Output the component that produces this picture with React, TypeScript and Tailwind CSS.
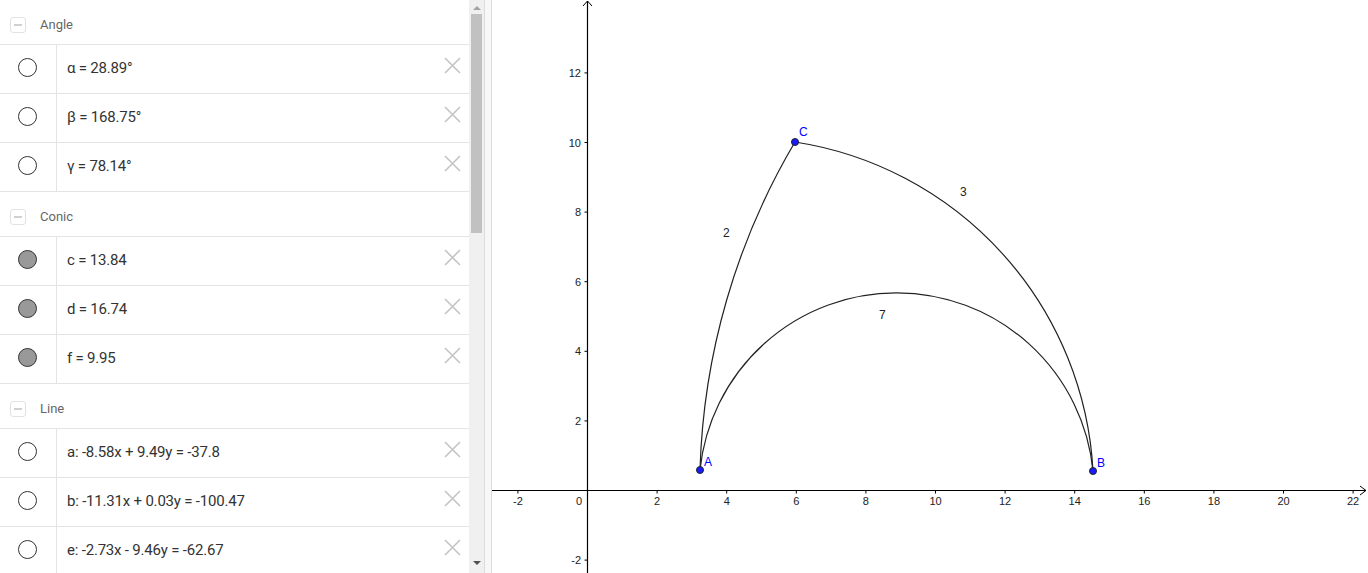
import React from "react";

type Item = { text: string; filled: boolean };
type Section = { title: string; items: Item[] };

const sections: Section[] = [
    {
        title: "Angle",
        items: [
            { text: "α = 28.89°", filled: false },
            { text: "β = 168.75°", filled: false },
            { text: "γ = 78.14°", filled: false },
        ],
    },
    {
        title: "Conic",
        items: [
            { text: "c = 13.84", filled: true },
            { text: "d = 16.74", filled: true },
            { text: "f = 9.95", filled: true },
        ],
    },
    {
        title: "Line",
        items: [
            { text: "a: -8.58x + 9.49y = -37.8", filled: false },
            { text: "b: -11.31x + 0.03y = -100.47", filled: false },
            { text: "e: -2.73x - 9.46y = -62.67", filled: false },
        ],
    },
];

const OX = 587.5;
const OY = 490.5;
const S = 34.8;

function SectionHeader({ title }: { title: string }) {
    return (
        <div className="flex h-[45px] items-center gap-[14px] border-b border-[#e4e4e4] pl-[10px] pt-[6px]">
            <div className="flex h-[16px] w-[16px] items-center justify-center rounded-[3px] border border-[#e2e2e2] bg-white">
                <div className="h-[2px] w-[8px] bg-[#d0d0d0]" />
            </div>
            <span className="text-[13px] text-[#666]">{title}</span>
        </div>
    );
}

function Row({ item }: { item: Item }) {
    return (
        <div className="flex h-[49px] items-stretch border-b border-[#e4e4e4]">
            <div className="flex w-[57px] shrink-0 items-center justify-center border-r border-[#e4e4e4] pb-[3px] pr-[1px]">
                <div
                    className={
                        item.filled
                            ? "h-[19px] w-[19px] rounded-full border border-[#333] bg-[#999]"
                            : "h-[19px] w-[19px] rounded-full border border-[#333] bg-white"
                    }
                />
            </div>
            <div className="flex flex-1 items-center pb-[1px] pl-[10px] text-[15px] tracking-[-0.2px] text-[#333]">
                {item.text}
            </div>
            <div className="flex w-[28px] items-center justify-center pb-[7px] pr-[6px]">
                <svg width="17" height="17" viewBox="0 0 17 17">
                    <path d="M1 1 L16 16 M16 1 L1 16" stroke="#c4c4c4" strokeWidth="1.6" />
                </svg>
            </div>
        </div>
    );
}

function Graphics() {
    const xTicks = [-2, 2, 4, 6, 8, 10, 12, 14, 16, 18, 20, 22];
    const yTicks = [12, 10, 8, 6, 4, 2, -2];
    const A = { x: 700, y: 470 };
    const B = { x: 1093, y: 471 };
    const C = { x: 795, y: 142 };

    return (
        <svg className="h-full w-full" viewBox="492 0 876 573" preserveAspectRatio="none">
            <g fontFamily="'Liberation Sans', Arial, sans-serif" fontSize="11" fill="#222">
                {/* axes */}
                <line x1="492" y1={OY} x2="1366" y2={OY} stroke="#000" strokeWidth="1.2" />
                <path d="M1360 486 L1366 490.5 L1360 495" fill="none" stroke="#000" strokeWidth="1" />
                <line x1={OX} y1="1" x2={OX} y2="573" stroke="#000" strokeWidth="1.2" />
                <path d="M583 6 L587.5 1 L592 6" fill="none" stroke="#000" strokeWidth="1" />

                {xTicks.map((t) => {
                    const x = OX + t * S;
                    return (
                        <g key={"x" + t}>
                            <line x1={x} y1={OY} x2={x} y2={OY + 3} stroke="#000" />
                            <text x={x} y="505" textAnchor="middle">
                                {t < 0 ? "-" + Math.abs(t) : t}
                            </text>
                        </g>
                    );
                })}
                <text x="582" y="505" textAnchor="end">
                    0
                </text>
                {yTicks.map((t) => {
                    const y = OY - t * S;
                    return (
                        <g key={"y" + t}>
                            <line x1={OX - 3} y1={y} x2={OX} y2={y} stroke="#000" />
                            <text x="581" y={y + 4} textAnchor="end">
                                {t < 0 ? "-" + Math.abs(t) : t}
                            </text>
                        </g>
                    );
                })}

                {/* arcs */}
                <g fill="none" stroke="#222" strokeWidth="1.2">
                    <path d={`M${A.x} ${A.y} A683 683 0 0 1 ${C.x} ${C.y}`} />
                    <path d={`M${C.x} ${C.y} A352 352 0 0 1 ${B.x} ${B.y}`} />
                    <path d={`M${A.x} ${A.y} A197.5 197.5 0 0 1 ${B.x} ${B.y}`} />
                </g>

                <text x="723" y="237" fontSize="12">2</text>
                <text x="960" y="196" fontSize="12">3</text>
                <text x="879" y="319" fontSize="12">7</text>

                {[A, B, C].map((p, i) => (
                    <circle key={i} cx={p.x} cy={p.y} r="3.5" fill="#1a1aff" stroke="#222" strokeWidth="1" />
                ))}
                <g fill="#0000ff" fontSize="12">
                    <text x="704" y="466">A</text>
                    <text x="1097" y="467">B</text>
                    <text x="799" y="136">C</text>
                </g>
            </g>
        </svg>
    );
}

export default function App() {
    return (
        <div className="flex h-[573px] w-full overflow-hidden bg-white font-['Roboto',sans-serif]">
            <div className="w-[469px] shrink-0 overflow-hidden">
                {sections.map((s) => (
                    <div key={s.title}>
                        <SectionHeader title={s.title} />
                        {s.items.map((it) => (
                            <Row key={it.text} item={it} />
                        ))}
                    </div>
                ))}
            </div>

            {/* scrollbar */}
            <div className="flex w-[15px] shrink-0 flex-col items-center bg-[#f0f0f0]">
                <div className="mt-[6px] h-0 w-0 border-x-[4px] border-b-[4px] border-x-transparent border-b-[#a3a3a3]" />
                <div className="mt-[4px] h-[219px] w-[11px] bg-[#c1c1c1]" />
                <div className="flex-1" />
                <div className="mb-[8px] h-0 w-0 border-x-[4px] border-t-[4px] border-x-transparent border-t-[#505050]" />
            </div>

            {/* splitter */}
            <div className="w-[8px] shrink-0 border-x border-[#dcdcdc] bg-[#f7f7f7]" />

            <div className="min-w-0 flex-1">
                <Graphics />
            </div>
        </div>
    );
}
